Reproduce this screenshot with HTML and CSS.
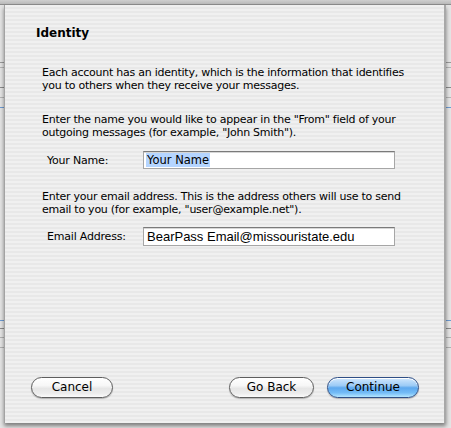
FILE: index.html
```html
<!DOCTYPE html>
<html>
<head>
<meta charset="utf-8">
<link rel="stylesheet" href="styles.css">
</head>
<body>
<div class="topbar"></div>
<div class="sheet">
  <h1 class="title">Identity</h1>
  <p class="para p1">Each account has an identity, which is the information that identifies<br>you to others when they receive your messages.</p>
  <p class="para p2">Enter the name you would like to appear in the "From" field of your<br>outgoing messages (for example, "John Smith").</p>
  <div class="row r1">
    <label class="label">Your Name:</label>
    <div class="field name"><span class="sel">Your Name</span></div>
  </div>
  <p class="para p3">Enter your email address. This is the address others will use to send<br>email to you (for example, "user@example.net").</p>
  <div class="row r2">
    <label class="label">Email Address:</label>
    <div class="field email">BearPass Email@missouristate.edu</div>
  </div>
  <div class="footer">
    <button class="btn">Cancel</button>
    <div class="spacer"></div>
    <button class="btn back">Go Back</button>
    <button class="btn primary">Continue</button>
  </div>
</div>
</body>
</html>
```
FILE: styles.css
```css
html, body {
  margin: 0;
  padding: 0;
}
body {
  width: 451px;
  height: 428px;
  overflow: hidden;
  background-color: #e4e4e4;
  background-image:
    linear-gradient(to bottom, transparent 62px, #9a9a9a 62px, #9a9a9a 63px, transparent 63px),
    linear-gradient(to bottom, transparent 67px, #b4b4b4 67px, #b4b4b4 68px, transparent 68px),
    linear-gradient(to bottom, transparent 87px, #8a8a8a 87px, #8a8a8a 88px, transparent 88px),
    linear-gradient(to bottom, transparent 97px, #b4b4b4 97px, #b4b4b4 98px, transparent 98px),
    linear-gradient(to bottom, transparent 107px, #6c9ad2 107px, #6c9ad2 108px, transparent 108px),
    linear-gradient(to bottom, transparent 320px, #6c9ad2 320px, #6c9ad2 321px, transparent 321px),
    linear-gradient(to bottom, transparent 328px, #8a8a8a 328px, #8a8a8a 329px, transparent 329px),
    linear-gradient(to bottom, transparent 337px, #b0b0b0 337px, #b0b0b0 338px, transparent 338px),
    linear-gradient(to bottom, transparent 347px, #b0b0b0 347px, #b0b0b0 348px, transparent 348px);
  font-family: "DejaVu Sans", "Noto Sans", sans-serif;
  color: #000;
}
.topbar {
  height: 4px;
  background: linear-gradient(to bottom, #cfcfcf, #b9b9b9);
  border-bottom: 1px solid #8c8c8c;
}
.sheet {
  box-sizing: border-box;
  margin-left: 4px;
  width: 442px;
  height: 418px;
  border-left: 1px solid #a3a3a3;
  border-right: 2px solid #a8a8a8;
  background: repeating-linear-gradient(to bottom, #f0f0f0 0, #f0f0f0 2px, #e8e8e8 2px, #e8e8e8 4px);
  box-shadow: 0 3px 4px rgba(0, 0, 0, 0.45);
  padding: 21px 25px 25px 0;
  display: flex;
  flex-direction: column;
}
.title {
  margin: 0 0 0 31px;
  font-size: 12px;
  line-height: 14px;
  font-weight: bold;
}
.para {
  margin: 0 0 0 37px;
  font-size: 11px;
  letter-spacing: -0.25px;
  line-height: 13px;
  white-space: nowrap;
}
.p1 { margin-top: 26px; }
.p2 { margin-top: 21px; }
.p3 { margin-top: 21px; }
.row {
  display: flex;
  align-items: center;
  margin-left: 42px;
}
.r1 { margin-top: 12px; }
.r2 { margin-top: 11px; }
.label {
  width: 96px;
  font-size: 11px;
  letter-spacing: -0.2px;
  line-height: 13px;
}
.field {
  box-sizing: border-box;
  width: 252px;
  background: #fff;
  border: 1px solid #a6a6a6;
  border-top-color: #7a7a7a;
  box-shadow: inset 0 1px 0 #d6d6d6;
  display: flex;
  align-items: center;
  padding-left: 2px;
  white-space: nowrap;
}
.name {
  height: 18px;
  font-size: 11.5px;
}
.sel {
  background: #b5d5ff;
  line-height: 14px;
  padding: 0 1px;
}
.email {
  height: 19px;
  font-family: "Liberation Sans", Arial, sans-serif;
  font-size: 13px;
  padding-left: 3px;
}
.footer {
  margin-top: auto;
  display: flex;
  align-items: center;
  padding-left: 26px;
}
.spacer { flex: 1; }
.btn {
  box-sizing: border-box;
  height: 21px;
  border-radius: 11px;
  border: 1px solid #5e5e5e;
  font-family: "DejaVu Sans", sans-serif;
  font-size: 12px;
  line-height: 19px;
  padding: 0;
  color: #000;
  background: linear-gradient(to bottom, #ffffff 0%, #f7f7f7 40%, #e6e6e6 55%, #ececec 80%, #fbfbfb 100%);
  box-shadow: 0 1px 1px rgba(0, 0, 0, 0.25), inset 0 1px 0 #fff;
  width: 82px;
}
.back { width: 85px; }
.primary {
  width: 92px;
  margin-left: 13px;
  border-color: #2f4f86;
  background: linear-gradient(to bottom, #d2e8fd 0%, #9ccbf6 40%, #5ea8ee 52%, #74bcf6 78%, #b4e6ff 100%);
}
```
